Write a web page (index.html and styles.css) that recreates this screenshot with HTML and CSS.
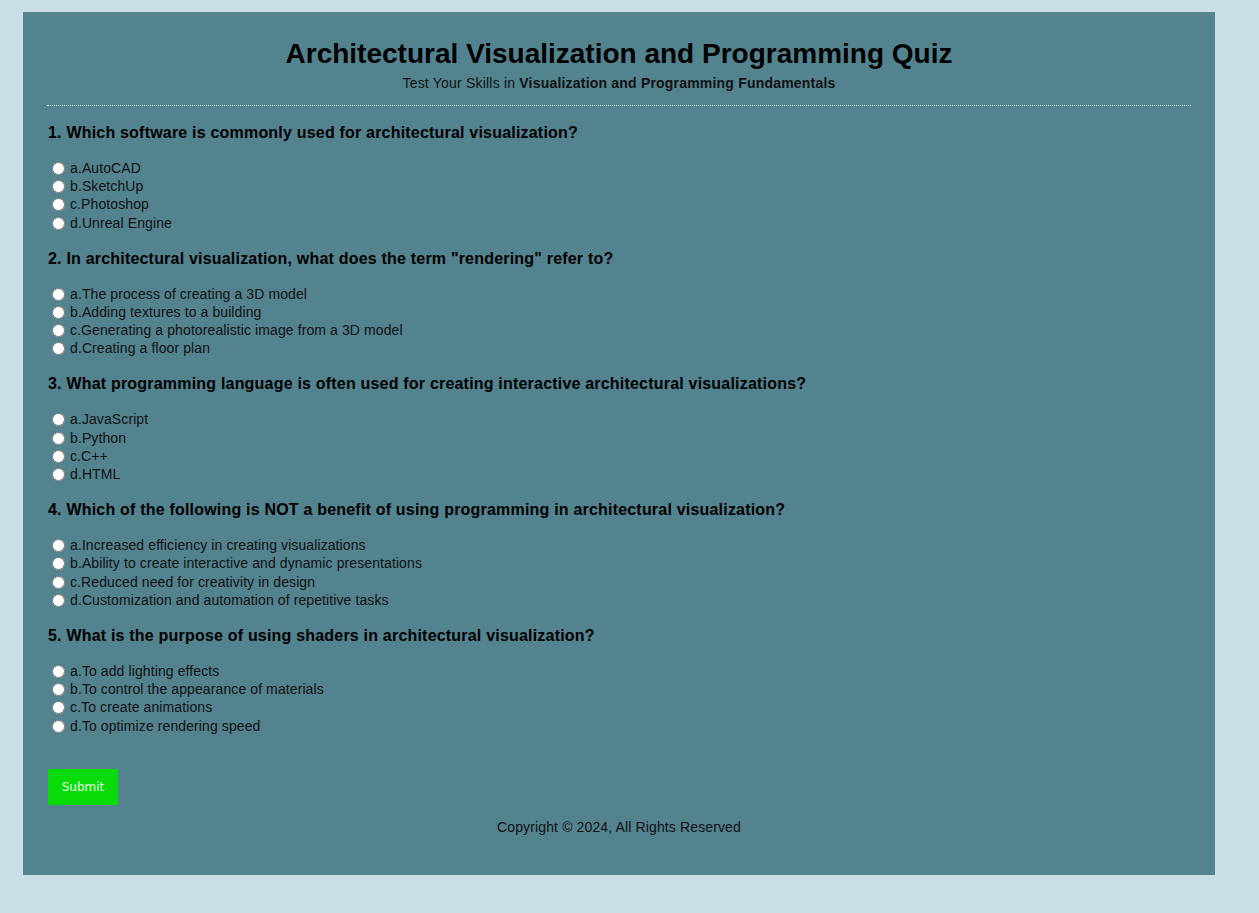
FILE: index.html
```html
<!DOCTYPE html>
<html lang="en">
<head>
<meta charset="utf-8">
<title>Architectural Visualization and Programming Quiz</title>
<link rel="stylesheet" href="styles.css">
</head>
<body>
<div class="container">
  <header class="header">
    <h1 class="title">Architectural Visualization and Programming Quiz</h1>
    <p class="subtitle">Test Your Skills in <strong>Visualization and Programming Fundamentals</strong></p>
  </header>
  <form class="quiz">
    <div class="question">
      <h3 class="q-text">1. Which software is commonly used for architectural visualization?</h3>
      <div class="options">
        <label class="option"><input type="radio" name="q1">a.AutoCAD</label>
        <label class="option"><input type="radio" name="q1">b.SketchUp</label>
        <label class="option"><input type="radio" name="q1">c.Photoshop</label>
        <label class="option"><input type="radio" name="q1">d.Unreal Engine</label>
      </div>
    </div>
    <div class="question">
      <h3 class="q-text">2. In architectural visualization, what does the term "rendering" refer to?</h3>
      <div class="options">
        <label class="option"><input type="radio" name="q2">a.The process of creating a 3D model</label>
        <label class="option"><input type="radio" name="q2">b.Adding textures to a building</label>
        <label class="option"><input type="radio" name="q2">c.Generating a photorealistic image from a 3D model</label>
        <label class="option"><input type="radio" name="q2">d.Creating a floor plan</label>
      </div>
    </div>
    <div class="question">
      <h3 class="q-text">3. What programming language is often used for creating interactive architectural visualizations?</h3>
      <div class="options">
        <label class="option"><input type="radio" name="q3">a.JavaScript</label>
        <label class="option"><input type="radio" name="q3">b.Python</label>
        <label class="option"><input type="radio" name="q3">c.C++</label>
        <label class="option"><input type="radio" name="q3">d.HTML</label>
      </div>
    </div>
    <div class="question">
      <h3 class="q-text">4. Which of the following is NOT a benefit of using programming in architectural visualization?</h3>
      <div class="options">
        <label class="option"><input type="radio" name="q4">a.Increased efficiency in creating visualizations</label>
        <label class="option"><input type="radio" name="q4">b.Ability to create interactive and dynamic presentations</label>
        <label class="option"><input type="radio" name="q4">c.Reduced need for creativity in design</label>
        <label class="option"><input type="radio" name="q4">d.Customization and automation of repetitive tasks</label>
      </div>
    </div>
    <div class="question">
      <h3 class="q-text">5. What is the purpose of using shaders in architectural visualization?</h3>
      <div class="options">
        <label class="option"><input type="radio" name="q5">a.To add lighting effects</label>
        <label class="option"><input type="radio" name="q5">b.To control the appearance of materials</label>
        <label class="option"><input type="radio" name="q5">c.To create animations</label>
        <label class="option"><input type="radio" name="q5">d.To optimize rendering speed</label>
      </div>
    </div>
    <button type="button" class="submit">Submit</button>
  </form>
  <footer class="footer">Copyright © 2024, All Rights Reserved</footer>
</div>
</body>
</html>
```
FILE: styles.css
```css
html, body {
  margin: 0;
  padding: 0;
}
body {
  background: #c9dfe5;
  font-family: "Liberation Sans", Arial, sans-serif;
  color: #000;
  padding: 12px 44px 38px 23px;
}
.container {
  background: #53838f;
  padding: 26px 24px 39px 24px;
}
.header {
  text-align: center;
  border-bottom: 1px dotted #e6eef0;
  padding-bottom: 13px;
}
.title {
  font-size: 28px;
  font-weight: bold;
  margin: 0 0 4px 0;
  line-height: 32px;
}
.subtitle {
  font-size: 14px;
  margin: 0;
  line-height: 18px;
  color: #111;
  letter-spacing: 0.2px;
}
.quiz {
  margin: 0;
}
.question {
  margin-top: 17.75px;
}
.q-text {
  font-size: 16px;
  font-weight: bold;
  margin: 0 0 17px 1px;
  line-height: 18px;
  letter-spacing: 0.2px;
}
.option {
  display: block;
  font-size: 14px;
  line-height: 18.25px;
  height: 18.25px;
  color: #111;
  letter-spacing: 0.1px;
}
.option input {
  margin: 3px 5px 0 5px;
  vertical-align: -2px;
}
.submit {
  display: block;
  margin-top: 34px;
  margin-left: 1px;
  width: 70px;
  height: 36px;
  border: none;
  background: #08db08;
  color: #e6fbe6;
  font-family: "DejaVu Sans", Verdana, sans-serif;
  font-size: 12px;
  padding: 0;
}
.footer {
  text-align: center;
  font-size: 14px;
  margin-top: 13px;
  line-height: 18px;
  color: #111;
  letter-spacing: 0.13px;
}
```
